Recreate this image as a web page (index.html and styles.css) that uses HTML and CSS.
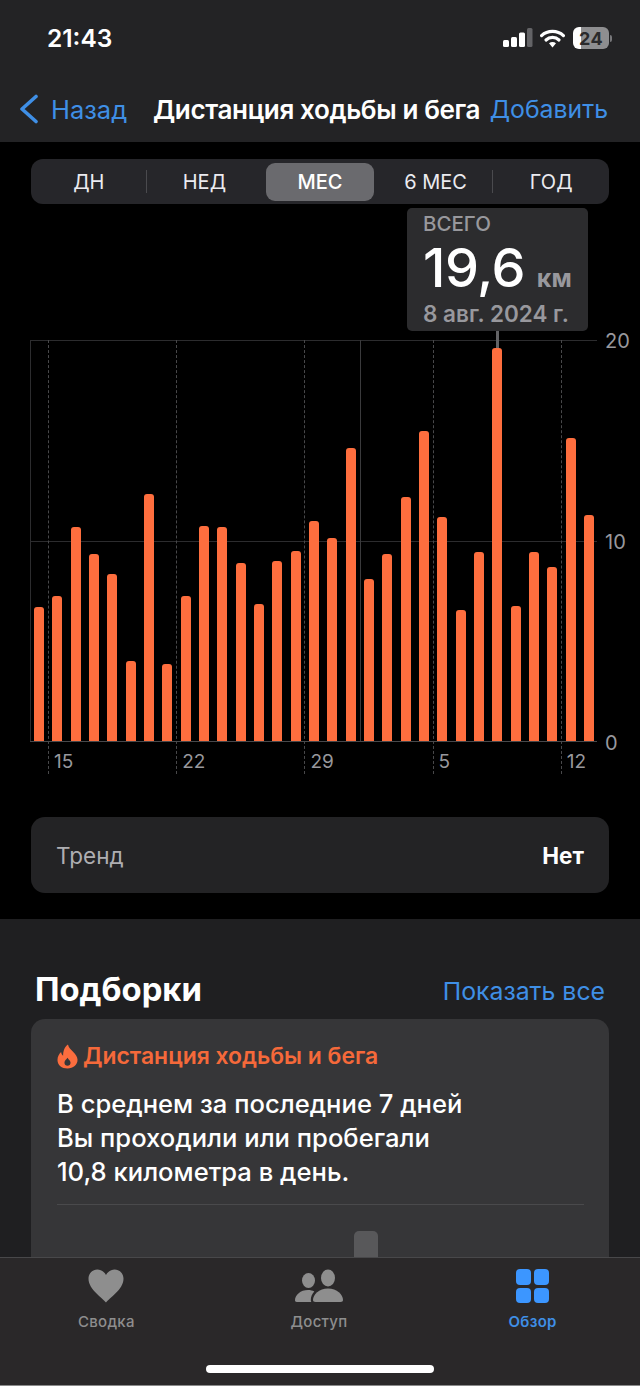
FILE: index.html
```html
<!DOCTYPE html>
<html lang="ru">
<head>
<meta charset="utf-8">
<title>Дистанция ходьбы и бега</title>
<link rel="stylesheet" href="styles.css">
</head>
<body>
<div class="phone">

  <header class="top">
    <div class="status">
      <span class="time">21:43</span>
      <div class="status-icons">
        <svg class="signal" width="30" height="20" viewBox="0 0 30 20">
          <rect x="0" y="12" width="6" height="7" rx="1.5" fill="#fff"/>
          <rect x="8" y="9" width="6" height="10" rx="1.5" fill="#fff"/>
          <rect x="16" y="4.5" width="6" height="14.5" rx="1.5" fill="#fff"/>
          <rect x="24" y="0" width="5.5" height="19" rx="1.5" fill="#636366"/>
        </svg>
        <svg class="wifi" width="25" height="19" viewBox="0 0 25 19">
          <path d="M1.6 6.6C7.6 1 17.4 1 23.4 6.6" fill="none" stroke="#fff" stroke-width="3.2" stroke-linecap="round"/>
          <path d="M6 11C9.6 7.6 15.4 7.6 19 11" fill="none" stroke="#fff" stroke-width="3.2" stroke-linecap="round"/>
          <path d="M9 14.2 12.5 18.6 16 14.2C14 12.5 11 12.5 9 14.2Z" fill="#fff"/>
        </svg>
        <div class="battery"><span class="battery-num">24</span></div>
        <span class="battery-nub"></span>
      </div>
    </div>
    <nav class="nav">
      <a class="back">
        <svg width="20" height="30" viewBox="0 0 20 30"><path d="M18 2.500 4 15l14 12.500" fill="none" stroke="#3f8fe6" stroke-width="3.6" stroke-linecap="round" stroke-linejoin="round"/></svg>
        <span>Назад</span>
      </a>
      <span class="nav-title">Дистанция ходьбы и бега</span>
      <a class="nav-add">Добавить</a>
    </nav>
  </header>

  <main class="scroll">
    <section class="dark">
      <div class="segments">
        <div class="seg sep">ДН</div>
        <div class="seg">НЕД</div>
        <div class="seg active">МЕС</div>
        <div class="seg sep">6 МЕС</div>
        <div class="seg">ГОД</div>
      </div>

      <div class="tip">
        <div class="tip-head">ВСЕГО</div>
        <div class="tip-value">19,6 <span class="tip-unit">км</span></div>
        <div class="tip-date">8 авг. 2024 г.</div>
      </div>

      <div class="chart">
        <div class="hlines"><i></i><i></i><i></i></div>
        <div class="left-line"></div>
        <div class="weeks">
          <div class="week">15</div>
          <div class="week">22</div>
          <div class="week">29</div>
          <div class="week">5</div>
          <div class="week">12</div>
        </div>
        <div class="month-line"></div>
        <div class="stem"></div>
        <div class="bars">
          <div class="bar" style="height:134px"></div>
          <div class="bar" style="height:145px"></div>
          <div class="bar" style="height:214px"></div>
          <div class="bar" style="height:187px"></div>
          <div class="bar" style="height:167px"></div>
          <div class="bar" style="height:80px"></div>
          <div class="bar" style="height:247px"></div>
          <div class="bar" style="height:77px"></div>
          <div class="bar" style="height:145px"></div>
          <div class="bar" style="height:215px"></div>
          <div class="bar" style="height:214px"></div>
          <div class="bar" style="height:178px"></div>
          <div class="bar" style="height:137px"></div>
          <div class="bar" style="height:180px"></div>
          <div class="bar" style="height:190px"></div>
          <div class="bar" style="height:220px"></div>
          <div class="bar" style="height:203px"></div>
          <div class="bar" style="height:293px"></div>
          <div class="bar" style="height:162px"></div>
          <div class="bar" style="height:187px"></div>
          <div class="bar" style="height:244px"></div>
          <div class="bar" style="height:310px"></div>
          <div class="bar" style="height:224px"></div>
          <div class="bar" style="height:131px"></div>
          <div class="bar" style="height:189px"></div>
          <div class="bar" style="height:393px"></div>
          <div class="bar" style="height:135px"></div>
          <div class="bar" style="height:189px"></div>
          <div class="bar" style="height:174px"></div>
          <div class="bar" style="height:303px"></div>
          <div class="bar" style="height:226px"></div>
        </div>
        <div class="yaxis"><span>20</span><span>10</span><span>0</span></div>
      </div>

      <div class="trend">
        <span class="trend-label">Тренд</span>
        <span class="trend-value">Нет</span>
      </div>
    </section>

    <section class="picks">
      <div class="picks-head">
        <h2>Подборки</h2>
        <a class="show-all">Показать все</a>
      </div>
      <div class="card">
        <div class="card-title">
          <svg width="21" height="25" viewBox="0 0 22 26"><path fill-rule="evenodd" fill="#fb6d3e" d="M11.5 0.5C12.3 4.2 14.4 5.6 16.8 8 19.6 10.8 21.5 13.3 21.5 16.5 21.5 22 17 25.5 11 25.5 5 25.5.5 22 .5 16.6.5 13.2 2.2 10.4 4.3 8.4 4.6 10.2 5.2 11.5 6.4 12.2 6.4 7.6 7.6 3.2 11.5.5ZM11 14.2C9.8 16 7.8 17.2 7.8 19.6 7.8 21.6 9.2 22.8 11 22.8 12.8 22.8 14.2 21.6 14.2 19.6 14.2 17.4 12.4 16.4 11 14.2Z"/></svg>
          <span>Дистанция ходьбы и бега</span>
        </div>
        <p class="card-text">В среднем за последние 7 дней<br>Вы проходили или пробегали<br>10,8 километра в день.</p>
        <div class="card-line"></div>
        <div class="ghost-wrap"><div class="ghost-bar"></div></div>
      </div>
    </section>
  </main>

  <footer class="tabs">
    <div class="tab-row">
      <div class="tab">
        <svg width="36" height="34" viewBox="0 0 36 34"><path fill="#8e8e8e" d="M18 33.5C15 29.5 0.5 20.5 0.5 9.8 0.5 4.4 4.5 0.5 9.3 0.5 13 0.5 16.2 2.6 18 6 19.8 2.6 23 0.5 26.7 0.5 31.5 0.5 35.5 4.4 35.5 9.8 35.5 20.5 21 29.5 18 33.5Z"/></svg>
        <span>Сводка</span>
      </div>
      <div class="tab">
        <svg width="48" height="33" viewBox="0 0 48 33">
          <ellipse cx="13.5" cy="11" rx="6.5" ry="7.5" fill="#8e8e8e"/>
          <ellipse cx="33" cy="8.5" rx="7" ry="8.5" fill="#8e8e8e"/>
          <path fill="#8e8e8e" d="M1.8 32.5C0.6 32.5 0 31.8 0 30.8 0 25.500 5.500 20.500 13 20.500 15.500 20.500 17.500 21 19.300 22 17 24.500 15.800 27.500 15.800 30.500 15.800 31.300 16 32 16.300 32.500Z"/>
          <path fill="#8e8e8e" d="M20.500 32.500C18.800 32.500 18 31.800 18 30.500 18 25 24 19 33 19 42 19 48 25 48 30.500 48 31.800 47.200 32.500 45.500 32.500Z"/>
        </svg>
        <span>Доступ</span>
      </div>
      <div class="tab current">
        <div class="squares"><i></i><i></i><i></i><i></i></div>
        <span>Обзор</span>
      </div>
    </div>
    <div class="home-bar"></div>
  </footer>

</div>
</body>
</html>
```

FILE: styles.css
```css
* {
    margin: 0;
    padding: 0;
    box-sizing: border-box;
}

html, body {
    height: 100%;
    background: #000;
}

body {
    font-family: Inter, "Noto Sans", sans-serif;
    color: #fff;
}

.phone {
    width: 640px;
    height: 1386px;
    display: flex;
    flex-direction: column;
    overflow: hidden;
}

/* top bar */
.top {
    height: 142px;
    flex: none;
    background: #232325;
}

.status {
    height: 76px;
    padding: 19px 28px 0 47px;
    display: flex;
    justify-content: space-between;
    align-items: flex-start;
}

.time {
    font-size: 24.5px;
    font-weight: 600;
    line-height: 38px;
}

.status-icons {
    display: flex;
    align-items: center;
    height: 38px;
}

.signal {
    margin-right: 7px;
}

.wifi {
    margin-right: 8px;
}

.battery {
    width: 36px;
    height: 22px;
    border-radius: 6px;
    background: linear-gradient(90deg, #fff 0 8px, #8e8e90 8px);
    display: flex;
    align-items: center;
    justify-content: center;
}

.battery-num {
    font-size: 18px;
    font-weight: 700;
    color: #2a2a2c;
    letter-spacing: 0.5px;
}

.battery-nub {
    width: 2px;
    height: 7px;
    margin-left: 1px;
    border-radius: 0 2px 2px 0;
    background: #77777a;
}

.nav {
    height: 66px;
    padding: 0 32px 0 20px;
    display: flex;
    align-items: center;
}

.back {
    display: flex;
    align-items: center;
    gap: 13px;
    width: 133px;
    color: #3f8fe6;
    font-size: 25.5px;
}

.back svg {
    margin-left: -2px;
}

.nav-title {
    font-size: 26.1px;
    font-weight: 600;
    letter-spacing: -0.4px;
    white-space: nowrap;
}

.nav-add {
    margin-left: auto;
    color: #3f8fe6;
    font-size: 24.8px;
}

/* scrolling part */
.scroll {
    flex: 1;
    min-height: 0;
    overflow: hidden;
}

.dark {
    height: 777px;
    background: #000;
    padding-top: 17px;
}

.segments {
    width: 578px;
    height: 45px;
    margin-left: 31px;
    border-radius: 12px;
    background: #26262a;
    display: grid;
    grid-template-columns: repeat(5, 1fr);
    align-items: center;
}

.seg {
    position: relative;
    height: 38px;
    font-size: 20px;
    line-height: 38px;
    text-align: center;
    color: #ebebf0;
}

.seg.active {
    margin: 0 4px;
    border-radius: 9px;
    background: #6a6a6e;
    color: #fff;
    font-weight: 500;
}

.seg.sep::after {
    content: "";
    position: absolute;
    right: 0;
    top: 7px;
    width: 1px;
    height: 23px;
    background: #4a4a4e;
}

.tip {
    width: 181px;
    height: 123px;
    margin: 4px 0 0 407px;
    padding: 5px 16px 0;
    border-radius: 5px;
    background: #2c2c2e;
}

.tip-head {
    font-size: 20.5px;
    font-weight: 500;
    line-height: 22px;
    color: #98989d;
}

.tip-value {
    margin-top: 4px;
    font-size: 54px;
    font-weight: 500;
    line-height: 58px;
    white-space: nowrap;
    letter-spacing: -0.5px;
}

.tip-unit {
    margin-left: -2px;
    font-size: 25px;
    font-weight: 700;
    line-height: 1;
    color: #98989d;
    letter-spacing: 0;
}

.tip-date {
    font-size: 22.5px;
    font-weight: 600;
    line-height: 34px;
    white-space: nowrap;
    color: #98989d;
}

/* chart, its parts sit on a shared canvas */
.chart {
    position: relative;
    height: 486px;
    margin-top: 9px;
}

.hlines {
    position: absolute;
    left: 30px;
    top: 0;
    width: 567px;
    height: 402px;
    display: flex;
    flex-direction: column;
    justify-content: space-between;
}

.hlines i {
    display: block;
    height: 1px;
    background: #2c2c2e;
}

.hlines i:last-child {
    background: #48484a;
}

.left-line {
    position: absolute;
    left: 30px;
    top: 0;
    width: 1px;
    height: 401px;
    background: #2c2c2e;
}

.weeks {
    position: absolute;
    left: 48px;
    top: 0;
    height: 434px;
    display: flex;
}

.week {
    width: 128.2px;
    height: 100%;
    border-left: 1px dashed #48484a;
    padding: 410px 0 0 5px;
    font-size: 19px;
    line-height: 24px;
    color: #98989d;
}

.month-line {
    position: absolute;
    left: 360px;
    top: 0;
    width: 1px;
    height: 401px;
    background: #3a3a3c;
}

.stem {
    position: absolute;
    left: 496px;
    top: -9px;
    width: 3px;
    height: 18px;
    background: #636366;
}

.bars {
    position: absolute;
    left: 34px;
    top: 0;
    width: 560px;
    height: 401px;
    display: flex;
    justify-content: space-between;
    align-items: flex-end;
}

.bar {
    width: 10px;
    border-radius: 3px 3px 0 0;
    background: #fe6e3e;
}

.yaxis {
    position: absolute;
    left: 605px;
    top: -11px;
    height: 426px;
    display: flex;
    flex-direction: column;
    justify-content: space-between;
    font-size: 20px;
    line-height: 24px;
    color: #98989d;
}

.trend {
    width: 578px;
    height: 76px;
    margin: -9px 0 0 31px;
    padding: 0 25px;
    border-radius: 14px;
    background: #232325;
    display: flex;
    align-items: center;
    justify-content: space-between;
    font-size: 22.5px;
}

.trend-label {
    color: #aeaeb2;
}

.trend-value {
    font-weight: 700;
}

/* picks */
.picks {
    height: 400px;
    padding-top: 44px;
    background: #1f1f21;
}

.picks-head {
    height: 52px;
    margin-bottom: 4px;
    padding: 0 35px;
    display: flex;
    align-items: center;
    justify-content: space-between;
}

.picks-head h2 {
    font-size: 32.8px;
    font-weight: 700;
}

.show-all {
    color: #3f8fe6;
    font-size: 24.8px;
    margin-top: 4px;
}

.card {
    width: 578px;
    height: 300px;
    margin-left: 31px;
    padding: 23px 25px 0 26px;
    border-radius: 14px 14px 0 0;
    background: #363638;
}

.card-title {
    display: flex;
    align-items: center;
    gap: 5px;
    color: #f5693a;
    font-size: 22.9px;
    font-weight: 600;
}

.card-text {
    margin-top: 17px;
    font-size: 25.6px;
    font-weight: 500;
    line-height: 34px;
}

.card-line {
    height: 1px;
    margin-top: 15px;
    background: #4a4a4c;
}

.ghost-wrap {
    display: flex;
    margin-left: 297px;
    padding-top: 26px;
}

.ghost-bar {
    width: 24px;
    height: 60px;
    border-radius: 5px 5px 0 0;
    background: #58585a;
}

/* tab bar */
.tabs {
    height: 129px;
    flex: none;
    background: #2a2829;
    border-top: 1px solid #48484a;
    border-bottom: 1px solid #8a8a8a;
}

.tab-row {
    display: grid;
    grid-template-columns: repeat(3, 1fr);
    height: 107px;
    padding: 11px 2px 0 0;
}

.tab {
    display: flex;
    flex-direction: column;
    align-items: center;
    font-size: 15px;
    font-weight: 500;
    letter-spacing: 0.3px;
    color: #8e8e8e;
}

.tab svg, .squares {
    height: 34px;
    margin-bottom: 9px;
}

.tab.current {
    margin-left: 2px;
    color: #3f8fe6;
    font-weight: 600;
}

.squares {
    width: 33px;
    display: grid;
    grid-template-columns: 1fr 1fr;
    gap: 3px;
}

.squares i {
    display: block;
    border-radius: 4px;
    background: #3c96ff;
}

.home-bar {
    width: 228px;
    height: 8px;
    margin: 0 auto;
    border-radius: 4px;
    background: #fff;
}
```
